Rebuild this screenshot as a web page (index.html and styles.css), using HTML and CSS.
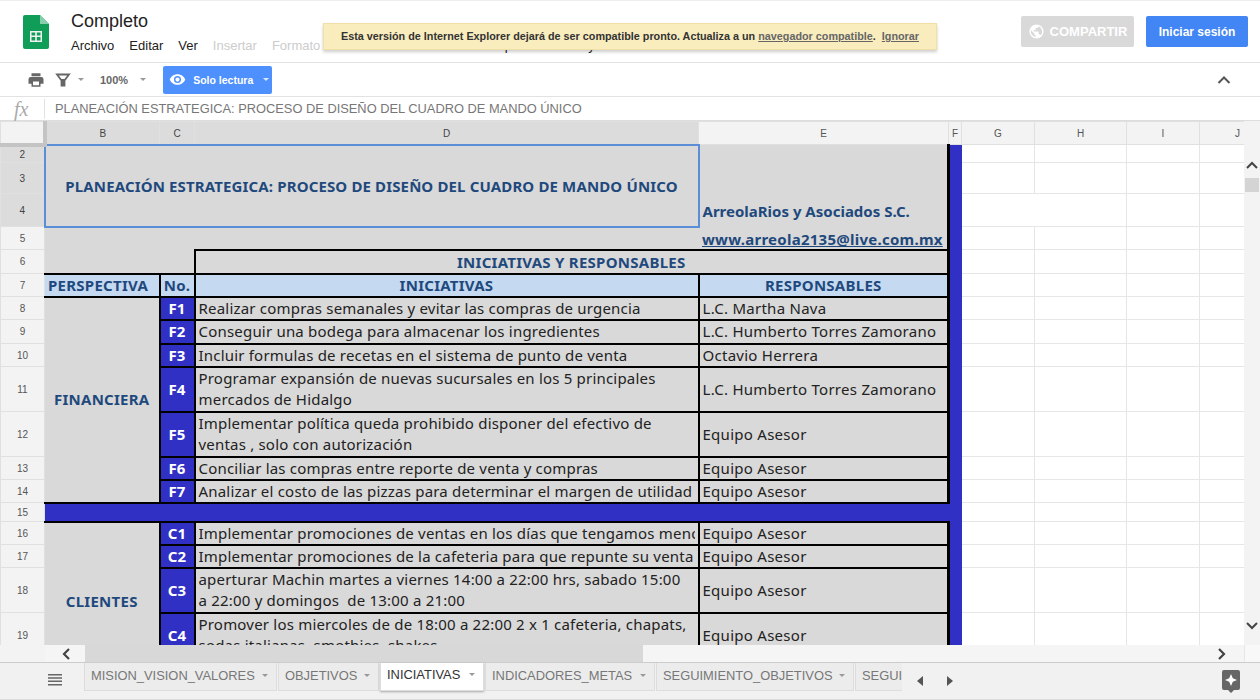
FILE: index.html
```html
<!DOCTYPE html>
<html>
<head>
<meta http-equiv="Content-Type" content="text/html; charset=utf-8"/>
<title>Completo</title>
<link rel="stylesheet" href="styles.css">
</head>
<body>

<header class="top">
  <svg class="logo" width="26" height="34" viewBox="0 0 26 34">
    <path d="M2 0H17L26 9V32a2 2 0 0 1-2 2H2a2 2 0 0 1-2-2V2a2 2 0 0 1 2-2z" fill="#0f9d58"/>
    <path d="M17 0L26 9H17z" fill="#87ceac"/>
    <path d="M7 16H19V27H7zM8.500 17.500V20.500H12.200V17.500zM13.800 17.500V20.500H17.500V17.500zM8.500 22V25.500H12.200V22zM13.800 22V25.500H17.500V22z" fill="#f1f1f1" fill-rule="evenodd"/>
  </svg>
  <div class="docinfo">
    <div class="doctitle">Completo</div>
    <nav class="menu">
      <span>Archivo</span><span>Editar</span><span>Ver</span>
      <span class="off">Insertar</span><span class="off">Formato</span>
      <span>Datos</span><span>Herramientas</span><span>Complementos</span><span>Ayuda</span>
    </nav>
  </div>
  <div class="actions">
    <button class="btn share">
      <svg width="17" height="17" viewBox="0 0 24 24"><path d="M12 2a10 10 0 1 0 0 20 10 10 0 0 0 0-20zM11 19.900A8 8 0 0 1 4.200 10.200L9 15v1a2 2 0 0 0 2 2zm6.900-2.500A2 2 0 0 0 16 16h-1v-3a1 1 0 0 0-1-1H8v-2h2a1 1 0 0 0 1-1V7h2a2 2 0 0 0 2-2v-.4a8 8 0 0 1 2.900 12.800z" fill="#fff"/></svg>
      COMPARTIR
    </button>
    <button class="btn login">Iniciar sesión</button>
  </div>
  <div class="notice">Esta versión de Internet Explorer dejará de ser compatible pronto. Actualiza a un <a>navegador compatible</a>.&nbsp; <a>Ignorar</a></div>
</header>

<div class="toolbar">
  <svg class="print" width="18" height="18" viewBox="0 0 24 24"><path d="M19 8H5a3 3 0 0 0-3 3v6h4v4h12v-4h4v-6a3 3 0 0 0-3-3zm-3 11H8v-5h8zM18 3H6v4h12z" fill="#666"/></svg>
  <svg class="filter" width="16" height="16" viewBox="0 0 16 16"><path d="M2 2.500H14L9.500 8.500V13.500H6.500V8.500z" fill="none" stroke="#666" stroke-width="1.800"/><path d="M5.500 7H10.500L9.500 8.500V13.500H6.500V8.500z" fill="#666"/></svg>
  <span class="caret"></span>
  <span class="zoom-level">100%</span>
  <span class="caret"></span>
  <button class="readonly">
    <svg width="17" height="17" viewBox="0 0 24 24"><path d="M12 4.500C7 4.500 2.700 7.600 1 12c1.700 4.400 6 7.500 11 7.500s9.300-3.100 11-7.500c-1.700-4.400-6-7.500-11-7.500zM12 17a5 5 0 1 1 0-10 5 5 0 0 1 0 10zm0-8a3 3 0 1 0 0 6 3 3 0 0 0 0-6z" fill="#fff"/></svg>
    <span>Solo lectura</span>
    <span class="caret white"></span>
  </button>
  <svg class="collapse" width="14" height="10" viewBox="0 0 14 10"><path d="M1.500 8L7 2.500 12.500 8" fill="none" stroke="#555" stroke-width="2"/></svg>
</div>

<div class="formula">
  <span class="fx">fx</span>
  <span class="formula-text">PLANEACIÓN ESTRATEGICA: PROCESO DE DISEÑO DEL CUADRO DE MANDO ÚNICO</span>
</div>

<div class="gridwrap">
  <table class="sheet">
    <colgroup>
      <col class="c-num"><col class="c-b"><col class="c-c"><col class="c-d"><col class="c-e"><col class="c-f"><col class="c-g"><col class="c-h"><col class="c-i"><col class="c-j">
    </colgroup>
    <tr class="h23 colhead">
      <th class="corner"></th><th class="sel">B</th><th class="sel">C</th><th class="sel">D</th><th>E</th><th>F</th><th>G</th><th>H</th><th>I</th><th class="last">J</th>
    </tr>
    <tr class="h18">
      <th class="sel">2</th>
      <td class="title" colspan="3" rowspan="3">PLANEACIÓN ESTRATEGICA: PROCESO DE DISEÑO DEL CUADRO DE MANDO ÚNICO</td>
      <td class="gray company" rowspan="3">ArreolaRios y Asociados S.C.</td>
      <td class="band" rowspan="13"></td>
      <td></td><td></td><td></td><td></td>
    </tr>
    <tr class="h31"><th class="sel">3</th><td></td><td></td><td></td><td></td></tr>
    <tr class="h33"><th class="sel">4</th><td colspan="2"></td><td></td><td></td></tr>
    <tr class="h23">
      <th>5</th><td class="gray" colspan="3"></td><td class="gray mail">www.arreola2135@live.com.mx</td>
      <td></td><td></td><td></td><td></td>
    </tr>
    <tr class="h24">
      <th>6</th><td class="gray" colspan="2"></td><td class="gray head box band-title" colspan="2">INICIATIVAS Y RESPONSABLES</td>
      <td></td><td></td><td></td><td></td>
    </tr>
    <tr class="h23">
      <th>7</th><td class="light head box noleft lead">PERSPECTIVA</td><td class="light head box">No.</td><td class="light head box">INICIATIVAS</td><td class="light head box">RESPONSABLES</td>
      <td></td><td></td><td></td><td></td>
    </tr>
    <tr class="h23">
      <th>8</th><td class="gray head box noleft" rowspan="7">FINANCIERA</td><td class="code">F1</td>
      <td class="gray box nowrap">Realizar compras semanales y evitar las compras de urgencia</td><td class="gray box wide">L.C. Martha Nava</td>
      <td></td><td></td><td></td><td></td>
    </tr>
    <tr class="h24">
      <th>9</th><td class="code">F2</td>
      <td class="gray box nowrap">Conseguir una bodega para almacenar los ingredientes</td><td class="gray box wide">L.C. Humberto Torres Zamorano</td>
      <td></td><td></td><td></td><td></td>
    </tr>
    <tr class="h23">
      <th>10</th><td class="code">F3</td>
      <td class="gray box nowrap">Incluir formulas de recetas en el sistema de punto de venta</td><td class="gray box wide">Octavio Herrera</td>
      <td></td><td></td><td></td><td></td>
    </tr>
    <tr class="h45">
      <th>11</th><td class="code">F4</td>
      <td class="gray box">Programar expansión de nuevas sucursales en los 5 principales mercados de Hidalgo</td><td class="gray box wide">L.C. Humberto Torres Zamorano</td>
      <td></td><td></td><td></td><td></td>
    </tr>
    <tr class="h45">
      <th>12</th><td class="code">F5</td>
      <td class="gray box">Implementar política queda prohibido disponer del efectivo de ventas , solo con autorización</td><td class="gray box wide">Equipo Asesor</td>
      <td></td><td></td><td></td><td></td>
    </tr>
    <tr class="h23">
      <th>13</th><td class="code">F6</td>
      <td class="gray box nowrap">Conciliar las compras entre reporte de venta y compras</td><td class="gray box wide">Equipo Asesor</td>
      <td></td><td></td><td></td><td></td>
    </tr>
    <tr class="h23">
      <th>14</th><td class="code">F7</td>
      <td class="gray box nowrap">Analizar el costo de las pizzas para determinar el margen de utilidad</td><td class="gray box wide">Equipo Asesor</td>
      <td></td><td></td><td></td><td></td>
    </tr>
    <tr class="h19">
      <th>15</th><td class="blue" colspan="4"></td><td class="bandgap"></td>
      <td></td><td></td><td></td><td></td>
    </tr>
    <tr class="h23">
      <th>16</th><td class="gray head box noleft" rowspan="5">CLIENTES</td><td class="code">C1</td>
      <td class="gray box nowrap"><div class="clip">Implementar promociones de ventas en los días que tengamos menos</div></td><td class="gray box wide">Equipo Asesor</td>
      <td class="band" rowspan="5"></td>
      <td></td><td></td><td></td><td></td>
    </tr>
    <tr class="h23">
      <th>17</th><td class="code">C2</td>
      <td class="gray box nowrap"><div class="clip">Implementar promociones de la cafeteria para que repunte su venta</div></td><td class="gray box wide">Equipo Asesor</td>
      <td></td><td></td><td></td><td></td>
    </tr>
    <tr class="h45">
      <th>18</th><td class="code">C3</td>
      <td class="gray box">aperturar Machin martes a viernes 14:00 a 22:00 hrs, sabado 15:00<br>a 22:00 y domingos&nbsp; de 13:00 a 21:00</td><td class="gray box wide">Equipo Asesor</td>
      <td></td><td></td><td></td><td></td>
    </tr>
    <tr class="h45">
      <th>19</th><td class="code">C4</td>
      <td class="gray box">Promover los miercoles de de 18:00 a 22:00 2 x 1 cafeteria, chapats, sodas italianas, smothies, shakes</td><td class="gray box wide">Equipo Asesor</td>
      <td></td><td></td><td></td><td></td>
    </tr>
    <tr class="h24">
      <th>20</th><td class="code"></td><td class="gray box"></td><td class="gray box"></td>
      <td></td><td></td><td></td><td></td>
    </tr>
  </table>
  <div class="vscroll">
    <svg width="12" height="8" viewBox="0 0 12 8"><path d="M1 7L6 2l5 5" fill="none" stroke="#444" stroke-width="2"/></svg>
    <span class="vthumb"></span>
    <svg class="vdown" width="12" height="8" viewBox="0 0 12 8"><path d="M1 1l5 5 5-5" fill="none" stroke="#444" stroke-width="2"/></svg>
  </div>
</div>

<div class="hscroll">
  <div class="hgutter"></div>
  <svg class="hleft" width="10" height="12" viewBox="0 0 10 12"><path d="M8 1L3 6l5 5" fill="none" stroke="#444" stroke-width="2.200"/></svg>
  <div class="htrack"><span class="hthumb"></span></div>
  <svg class="hright" width="10" height="12" viewBox="0 0 10 12"><path d="M2 1l5 5-5 5" fill="none" stroke="#444" stroke-width="2.200"/></svg>
  <div class="hcorner"></div>
</div>

<footer class="tabs">
  <svg class="sheetlist" width="14" height="12" viewBox="0 0 14 12"><path d="M0 0H14V1.500H0zM0 3.300H14V4.800H0zM0 6.600H14V8.100H0zM0 9.900H14V11.400H0z" fill="#666"/></svg>
  <div class="tab t1">MISION_VISION_VALORES<span class="caret"></span></div>
  <div class="tab t2">OBJETIVOS<span class="caret"></span></div>
  <div class="tab t3 active">INICIATIVAS<span class="caret"></span></div>
  <div class="tab t4">INDICADORES_METAS<span class="caret"></span></div>
  <div class="tab t5">SEGUIMIENTO_OBJETIVOS<span class="caret"></span></div>
  <div class="tab t6">SEGUIMIENTO</div>
  <div class="tabnav">
    <svg width="8" height="12" viewBox="0 0 8 12"><path d="M7 1V11L1 6z" fill="#555"/></svg>
    <svg width="8" height="12" viewBox="0 0 8 12"><path d="M1 1V11L7 6z" fill="#555"/></svg>
  </div>
  <svg class="explore" width="18" height="24" viewBox="0 0 18 24"><path d="M2 0H16a2 2 0 0 1 2 2V18a2 2 0 0 1-2 2H12L9 23 6 20H2a2 2 0 0 1-2-2V2a2 2 0 0 1 2-2z" fill="#666"/><path d="M9 4l1.800 4.200L15 10l-4.200 1.800L9 16l-1.800-4.200L3 10l4.200-1.800z" fill="#fff"/></svg>
</footer>

</body>
</html>
```

FILE: styles.css
```css
html, body {
  margin: 0;
  padding: 0;
  height: 700px;
  overflow: hidden;
  background: white;
}

body {
  display: flex;
  flex-direction: column;
  font-family: 'Liberation Sans', Arial, sans-serif;
  color: #333;
}

/* header */

.top {
  position: relative;
  flex: 0 0 63px;
  box-sizing: border-box;
  display: flex;
  border-top: 1px solid #eee;
  border-bottom: 1px solid #e2e2e2;
}

.logo {
  margin: 14px 0 0 23px;
}

.docinfo {
  margin: 10px 0 0 22px;
}

.doctitle {
  font-size: 18px;
  line-height: 21px;
  color: #222;
}

.menu {
  display: flex;
  gap: 15px;
  margin-top: 6px;
  font-size: 13px;
  line-height: 16px;
  color: #222;
}

.menu .off {
  color: #ccc;
}

.actions {
  margin-left: auto;
  display: flex;
  gap: 12px;
  padding: 15px 12px 0 0;
}

.btn {
  height: 31px;
  border: 0;
  border-radius: 2px;
  color: white;
  font-family: 'Liberation Sans', Arial, sans-serif;
  font-weight: bold;
  font-size: 12px;
  display: flex;
  align-items: center;
  justify-content: center;
  padding: 0;
}

.share {
  width: 113px;
  gap: 5px;
  background: #d9d9d9;
  font-size: 13px;
}

.login {
  width: 102px;
  background: #4285f4;
}

.notice {
  position: absolute;
  left: 323px;
  top: 22px;
  width: 614px;
  height: 27px;
  box-sizing: border-box;
  background: #f9edbe;
  border: 1px solid #f0e0a8;
  box-shadow: 0 2px 3px rgba(0,0,0,0.2);
  font-size: 10.8px;
  font-weight: bold;
  line-height: 25px;
  text-align: center;
  color: #333;
}

.notice a {
  color: #666;
  text-decoration: underline;
}

/* toolbar */

.toolbar {
  flex: 0 0 34px;
  box-sizing: border-box;
  display: flex;
  align-items: center;
  border-bottom: 1px solid #e2e2e2;
}

.print {
  margin-left: 27px;
}

.filter {
  margin-left: 10px;
}

.caret {
  display: inline-block;
  flex: none;
  width: 0;
  height: 0;
  border-left: 3px solid transparent;
  border-right: 3px solid transparent;
  border-top: 3px solid #999;
}

.toolbar .caret {
  margin-left: 7px;
}

.zoom-level {
  margin-left: 16px;
  font-size: 11px;
  font-weight: bold;
  color: #666;
}

.toolbar .zoom-level + .caret {
  margin-left: 12px;
}

.readonly {
  margin-left: 17px;
  width: 109px;
  height: 28px;
  border: 0;
  border-radius: 2px;
  background: #4d90fe;
  color: white;
  font-family: 'Liberation Sans', Arial, sans-serif;
  font-size: 10.5px;
  font-weight: bold;
  display: flex;
  align-items: center;
  padding: 0 0 0 6px;
  gap: 7px;
}

.toolbar .caret.white {
  border-top-color: #dce8ff;
  margin-left: 3px;
}

.collapse {
  margin-left: auto;
  margin-right: 29px;
}

/* formula bar */

.formula {
  flex: 0 0 24px;
  box-sizing: border-box;
  display: flex;
  align-items: center;
  border-bottom: 1px solid #ddd;
}

.fx {
  width: 45px;
  box-sizing: border-box;
  padding-left: 14px;
  border-right: 1px solid #e2e2e2;
  font-family: 'Liberation Serif', serif;
  font-style: italic;
  font-size: 20px;
  line-height: 20px;
  color: #aaa;
}

.formula-text {
  margin-left: 10px;
  font-size: 12.85px;
  color: #777;
}

/* sheet */

.gridwrap {
  position: relative;
  flex: 0 0 524px;
  overflow: hidden;
}

.sheet {
  table-layout: fixed;
  width: 1244px;
  border-collapse: collapse;
  font-family: 'Noto Sans', sans-serif;
  font-size: 15px;
  letter-spacing: 0.2px;
  color: #222;
}

.c-num { width: 44px; }
.c-b { width: 115px; }
.c-c { width: 35px; }
.c-d { width: 504px; }
.c-e { width: 250px; }
.c-f { width: 13px; }
.c-g { width: 73px; }
.c-h { width: 92px; }
.c-i { width: 73px; }
.c-j { width: 45px; }

.h18 { height: 18px; }
.h19 { height: 19px; }
.h23 { height: 23px; }
.h24 { height: 24px; }
.h31 { height: 31px; }
.h33 { height: 33px; }
.h45 { height: 45px; }

.sheet th {
  background: #f3f3f3;
  border: 1px solid #e0e0e0;
  padding: 0;
  font-family: 'Liberation Sans', Arial, sans-serif;
  font-size: 10px;
  font-weight: normal;
  letter-spacing: 0;
  color: #555;
}

.colhead th {
  padding-top: 1px;
}

.sheet th.last {
  text-align: right;
  padding-right: 4px;
}

.sheet th.sel {
  background: #dcdcdc;
  color: #444;
}

.sheet th.corner {
  background: #f3f3f3;
  border-right: 4px solid #c4c4c4;
  border-bottom: 4px solid #c4c4c4;
}

.sheet td {
  padding: 0 3px;
  border: 1px solid #e6e6e6;
  line-height: 21px;
  overflow: hidden;
}

.sheet td.gray {
  background: #d9d9d9;
  border-color: #d9d9d9;
}

.sheet td.wide {
  letter-spacing: 0.27px;
}

.sheet td.title {
  padding-top: 2px;
  background: #d9d9d9;
  border: 2px solid #5b8ed6;
  text-align: center;
  font-weight: bold;
  letter-spacing: 0.14px;
  color: #1f497d;
  white-space: nowrap;
}

.sheet td.company {
  vertical-align: bottom;
  padding-bottom: 4px;
  font-weight: bold;
  letter-spacing: 0;
  color: #1f497d;
}

.sheet td.mail {
  padding-top: 3px;
  line-height: 18px;
  font-weight: bold;
  letter-spacing: 0.26px;
  color: #1f497d;
  text-decoration: underline;
  white-space: nowrap;
}

.sheet td.head {
  font-weight: bold;
  letter-spacing: 0.26px;
  text-align: center;
  color: #1f497d;
}

.sheet td.band-title {
  padding-top: 1px;
  line-height: 20px;
}

.sheet td.lead {
  text-align: left;
}

.sheet td.light {
  background: #c5d9f1;
}

.sheet td.box {
  border: 2px solid #000;
}

.sheet td.noleft {
  border-left: 0;
}

.sheet td.code {
  background: #3030c4;
  border: 2px solid #000;
  color: white;
  font-weight: bold;
  text-align: center;
  padding: 0;
}

.sheet td.band {
  background: #3030c4;
  border: 1px solid #3030c4;
  border-left: 3px solid #000;
}

.sheet td.bandgap {
  background: #3030c4;
  border: 1px solid #3030c4;
}

.sheet td.blue {
  background: #3030c4;
  border: 2px solid #000;
  border-left: 0;
  border-right: 1px solid #3030c4;
}

.sheet td.nowrap {
  white-space: nowrap;
}

.clip {
  overflow: hidden;
  white-space: nowrap;
}

.vscroll {
  position: absolute;
  right: 0;
  top: 0;
  bottom: 0;
  width: 16px;
  background: #f3f3f3;
  display: flex;
  flex-direction: column;
  align-items: center;
  padding-top: 40px;
  box-sizing: border-box;
}

.vthumb {
  width: 14px;
  height: 14px;
  margin-top: 9px;
  background: #d4d4d4;
}

.vdown {
  margin-top: auto;
  margin-bottom: 15px;
}

/* horizontal scroll */

.hscroll {
  flex: 0 0 17px;
  display: flex;
  align-items: center;
  background: #f5f5f5;
}

.hgutter {
  width: 45px;
  height: 100%;
  background: #f3f3f3;
  flex: none;
}

.hleft {
  margin-left: 16px;
  flex: none;
}

.htrack {
  width: 1126px;
  margin-left: 14px;
  height: 100%;
  flex: none;
}

.hthumb {
  display: block;
  width: 558px;
  height: 100%;
  background: #d8d8d8;
}

.hright {
  flex: none;
  margin-left: 6px;
}

.hcorner {
  margin-left: auto;
  width: 16px;
  height: 100%;
  background: #f8f8f8;
  border-left: 1px solid #e6e6e6;
  box-sizing: border-box;
}

/* sheet tabs */

.tabs {
  flex: 0 0 38px;
  box-sizing: border-box;
  display: flex;
  align-items: flex-start;
  background: #f1f1f1;
  border-top: 1px solid #ccc;
  border-bottom: 1px solid #ddd;
}

.sheetlist {
  margin: 11px 22px 0 48px;
  flex: none;
}

.tab {
  box-sizing: border-box;
  flex: none;
  height: 28px;
  display: flex;
  align-items: center;
  justify-content: space-between;
  padding: 0 8px 2px 6px;
  margin-right: 1px;
  background: #ececec;
  border: 1px solid #ddd;
  border-top: 0;
  font-size: 12.9px;
  color: #777;
  white-space: nowrap;
  overflow: hidden;
}

.tab.active {
  padding-bottom: 4px;
  background: white;
  color: #333;
  box-shadow: 0 1px 2px rgba(0,0,0,0.3);
}

.t1 { width: 193px; }
.t2 { width: 101px; }
.t3 { width: 104px; }
.t4 { width: 170px; }
.t5 { width: 198px; }
.t6 { width: 47px; border-right: 0; padding-right: 0; }

.tabnav {
  display: flex;
  flex: none;
  gap: 22px;
  margin: 12px 0 0 13px;
}

.explore {
  margin: 7px 20px 0 auto;
}
```
